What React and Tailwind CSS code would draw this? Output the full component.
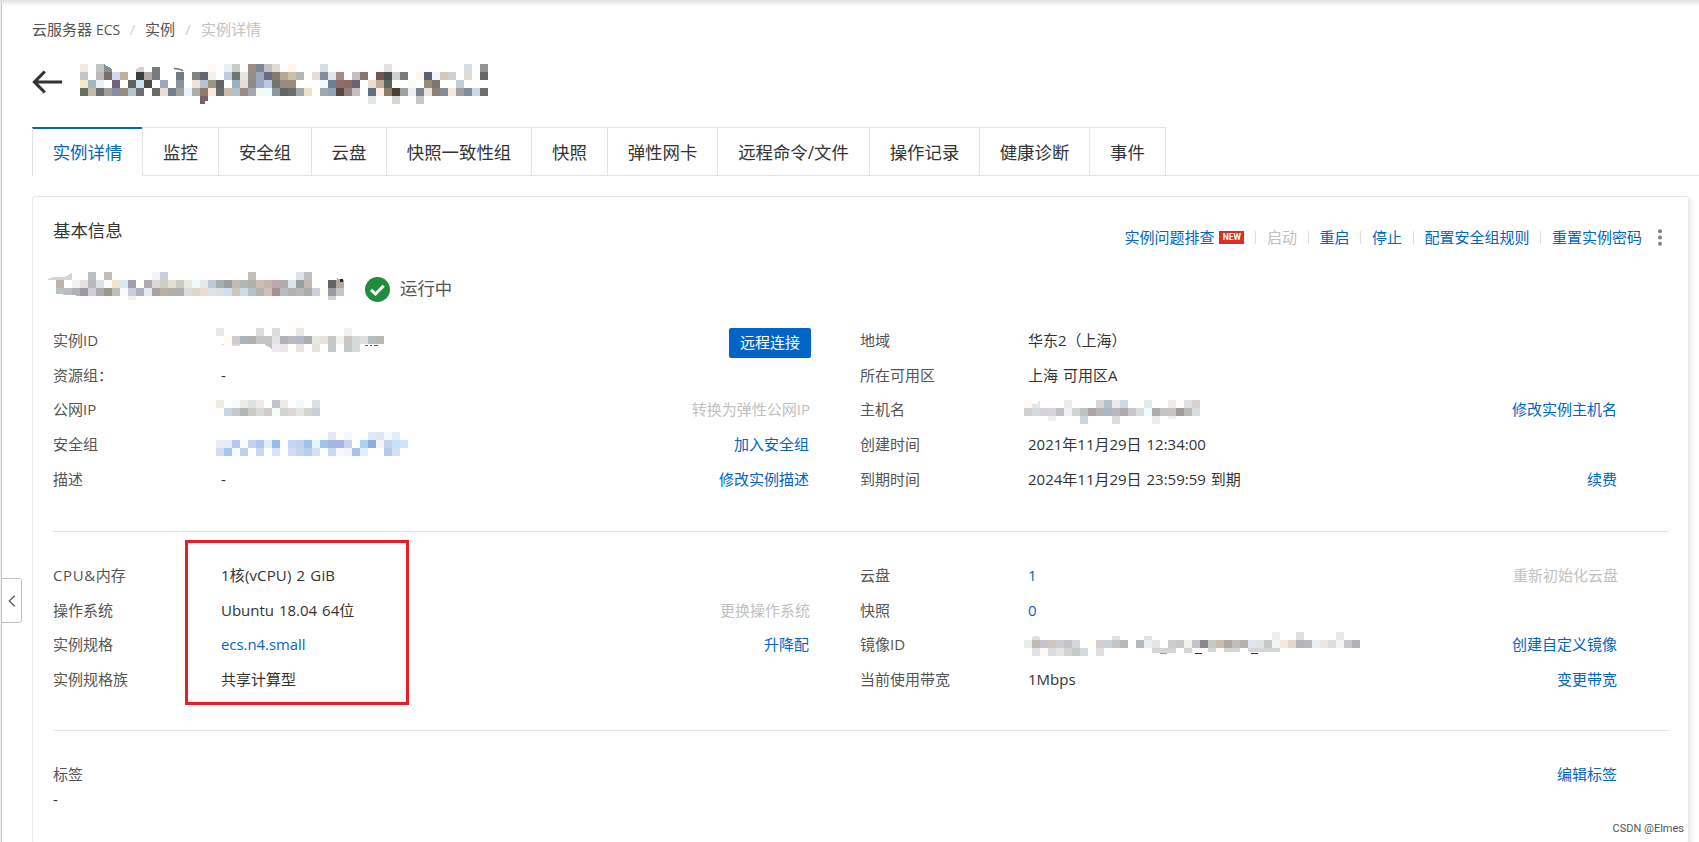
const CELL = 8;

// Mozaik penutup data sensitif: setiap baris = daftar "kolom:warna"
const titleMosaic = [
  '0:f3e8e0 2:c4c4c4 16:fff8f4 18:e9eff3 19:c8cacb 21:9a8d85 22:808490 23:c4bfc2 24:e2d8d5 26:fff3ea 30:d6dde9 38:e6e0de 48:d4dce7 50:939393',
  '0:c2c7c3 2:b9b9b9 3:7a6d6a 4:d0d9ef 5:bfae98 7:383d3d 8:b5aaa3 9:757b7f 12:6f7b86 14:828284 15:616575 16:f0f0ee 18:c0ccd9 19:6c7673 20:e5e7e0 21:928e89 22:9ba8bd 23:6e6982 24:857a70 25:b5a896 26:cabead 27:b5b5b6 28:fffffb 29:e5ddd9 30:848a98 31:e1e4e8 32:a18d84 34:c3bec2 35:85776e 37:6c5850 38:4c4e4d 39:cfcfd0 40:7c7a76 42:fef4ea 43:5c5e71 44:f0f3fc 45:d3c6ba 46:cdd0d1 48:dfdcd4 50:6a6768',
  '0:f4e8cc 1:a0b6c3 2:e8f0fa 4:706374 6:59645c 7:cde0f2 8:4b4a43 10:9ca9b8 12:8b919e 14:ece2d6 15:b5c2cf 16:9d9488 17:646464 19:9ab0c0 20:e6dcd8 21:8c8b88 22:9ba8bf 23:bcc6e0 24:6f7470 25:988a80 26:998c7a 28:fffffa 30:eefaff 31:6c8090 32:8a7068 33:8a6c61 34:6c6272 36:ecddd0 37:beae99 38:5d625c 41:f9fcf5 43:978d78 44:7c7670 47:c2cdd7',
  '0:627260 1:c7b7a8 2:6b6d70 3:9e9e9e 4:838da5 5:978b7c 6:b2c5cf 7:6d6f6f 9:6b6a68 10:ecdcd7 11:737f8a 12:a1a1a2 13:e9f2fb 14:ababab 15:90796b 16:f8e9da 17:686a6a 18:cbbca9 19:b1c0c9 20:998c88 21:a4a7af 22:f7f7ee 23:edfbff 24:8e979b 25:5f6464 26:6a6e6e 27:a3a9a6 28:efdfc8 30:9ca8b0 31:93a3b3 32:58483d 33:8f807f 34:c5bfc4 36:5d6f80 37:f9eee1 38:8d7c67 39:4a3f36 40:9f9f9f 41:ebeef3 42:7d848d 43:e7e5de 44:907f78 45:838b97 46:f2e8df 47:a1a09f 48:84899d 49:cbd7e2 50:6e6e6e',
  '15:706365 36:e1e6ea 39:d5d6d0 42:c6c6c6',
];

const nameMosaic = [
  '5:bbbcc4 7:c0bebb 13:f2f3fa 14:c9cedd 25:c2beb9 31:dce2e7 32:bdbfc0',
  '1:bab2ab 3:f2f2f2 4:e6dfe2 5:b9b8bb 6:dae1e8 7:fcfbf9 8:f0e2cf 9:dae6f1 10:9fa0a9 12:ada8b1 13:dbd8d2 14:cecdc2 15:e3ded1 16:cccbc2 17:e9e9e2 18:eff9fb 19:e6e8e7 20:bdcad3 21:a5adae 22:999f9f 23:c5b9b5 24:b2b5b5 25:b0b1ae 26:c8bdb7 27:c5b5ae 28:bfa8ab 29:adadae 30:dce2e9 31:989fa0 32:c2b7b2 35:646464 36:b5a79c',
  '1:bac2c5 2:b9bfc0 3:b1b0b4 4:9b99a5 5:d4cdd6 6:aeabac 7:99978e 8:bfbfba 9:f6fafe 10:c5cfe0 11:abb1bd 12:e6e9ef 13:a8a2a3 14:b9afa5 15:b2aea9 16:afaeae 17:dbdcda 18:dcd7ca 19:ebdacd 20:e0e3e6 21:dae1e1 22:d0dfee 23:cbc5bf 24:ccdbe8 25:b4c2ce 26:b0b5b4 27:cdbfbb 28:a3928f 29:b8bcbe 30:b2b0b2 31:b6b7b9 32:ababad 33:cbd0da 34:fffdf8 35:9b9aa2 36:c2c6cb',
  '10:f8efe9 35:d3d3d3',
];

const idMosaic = [
  '0:e8e8e8 5:d9dce1 7:dcdcdc 10:ede7e4 16:f4f0ee',
  '1:fffbf2 2:cdcdcd 3:abb3bf 4:b0b1ac 5:c5c4c6 6:c5c4c6 7:e3e4e2 8:b3b0b9 9:bdbabe 10:b5b9c7 11:adadad 12:e7e9e7 13:e4e4dd 14:c6c7c5 15:f0f0ec 16:c9c5c1 17:d3dada 18:dfdfdf 19:b5bec1 20:bab8b2',
  '7:ece8ed 8:ebe6e4 10:e8e2e0 12:e8e2df 14:c3c8c8 16:c2c8c8 17:d3dad8',
];

const ipMosaic = [
  '0:f0eae5 2:f5fbfe 3:eeebe7 4:dae2e2 5:f0eae7 7:c0c3cb 8:eee9e6 10:f1f8fb 12:dde0e3',
  '1:c8d6e1 2:c9c8c9 3:b0b8b5 4:c9c9c8 5:d7dad9 6:d1cbcd 7:f5fdfb 8:d3d3d1 9:dbd8d7 10:e4e4e2 11:d5d4d3 12:cbced8',
];

const groupMosaic = [
  '14:e0e8f5 16:f0f8fe 19:e0e7f5 20:dfe6f3 21:f0faff 22:e3ebf7',
  '0:e8ecf7 1:e6e9f7 2:b8c6e8 3:f9f9fc 4:c5d2ee 5:acc9ec 6:dfedf8 7:96bdea 9:c5d6ee 10:bed1ef 11:9fc2e8 12:e5f3fc 13:a1c3e8 14:a6b6e0 15:a6b6e0 16:cdd0ea 18:a9d3f3 19:8fabdd 20:f2f2f8 21:c3d3ed 22:c4e1f5 23:cfe4f5',
  '0:d3dcf1 1:a3c7ec 2:f5fdff 3:bfd0ed 5:c8d7ef 7:d6e3f5 9:d4dbf0 10:c5d4ed 11:b5cfec 12:d3dff3 14:c8daee 15:f8f8fc 16:f0f5fc 17:adc1e6 18:dff0fa 21:b7c8e8 22:d5dff3',
];

const hostMosaic = [
  '0:fdf8f4 5:ebebec 9:d9d7d3 10:b3c0c9 11:ecebe8 12:ccdae4 15:e6e7e9 18:ececec 20:dde0e4 21:d7d2cf',
  '0:cfcfd0 1:d3d9e1 2:d5d3d9 3:d8d4d7 4:c1bec4 5:eef2f8 6:d0d3d1 7:bcc3c1 8:aea4a6 9:b5b3b6 10:aab6c5 11:bab8bd 12:aea9ae 13:cac6c8 14:d8dcdd 15:eefbff 16:aaaeac 17:c4c4c3 18:c6c5c3 19:9f9b98 20:b9bab6 21:d8dde1',
  '7:c7d6e0 11:dfdbd8 16:ecece8',
];

const imageMosaic = [
  '31:eceeef 34:e0dde1 39:e9e8e8',
  '0:e9edea 1:bfbab0 2:c4c3cf 3:d0c6c0 4:ccccd2 5:c3c3c7 6:d8d5de 8:fffff2 9:d5cccd 10:cad1dc 11:c5c4ca 12:b7b9b6 14:b0b9c1 15:eaeef3 16:e7e3e0 18:cbcdc9 19:c8c8c9 20:f3efed 21:c3c3cc 22:8a878e 23:c4cbc5 24:cabda9 25:aea7a0 26:bebdb9 27:b6b2aa 28:dfe6f0 29:e0e3e1 30:c6c7c9 31:f3f5f5 32:f2e8dc 33:e4d7cb 34:b5b3bb 35:b7b9c1 36:e9eef7 37:efe6e1 38:dcdddd 39:f5f4f4 40:c8c6ca 41:b2b1ba',
  '1:e1e1e7 2:fcf8f5 3:dbdce2 4:e2e6e4 5:d5d2d3 6:c4cac7 7:d5d8dc 9:e0dde0',
];

function Mosaic({ rows, cols, className, children }) {
  return (
    <svg
      width={cols * CELL}
      height={rows.length * CELL}
      shapeRendering="crispEdges"
      className={`shrink-0 overflow-visible ${className || ''}`}
    >
      {rows.map((row, y) =>
        row.split(' ').map((cell) => {
          const [x, color] = cell.split(':');
          return <rect key={`${x}-${y}`} x={x * CELL} y={y * CELL} width={CELL} height={CELL} fill={`#${color}`} />;
        })
      )}
      {children}
    </svg>
  );
}

const tabs = [
  { label: '监控', width: 'w-[76px]' },
  { label: '安全组', width: 'w-[93px]' },
  { label: '云盘', width: 'w-[75px]' },
  { label: '快照一致性组', width: 'w-[145px]' },
  { label: '快照', width: 'w-[76px]' },
  { label: '弹性网卡', width: 'w-[110px]' },
  { label: '远程命令/文件', width: 'w-[152px]' },
  { label: '操作记录', width: 'w-[110px]' },
  { label: '健康诊断', width: 'w-[110px]' },
  { label: '事件', width: 'w-[76px]' },
];

const actions = ['重启', '停止', '配置安全组规则', '重置实例密码'];

function Row({ label, children, action, disabled }) {
  return (
    <div className="flex h-[34.75px] items-center">
      <div className="w-[168px] shrink-0 text-[#555]">{label}</div>
      <div className="flex flex-1 items-center text-[#333] [word-spacing:1px]">{children}</div>
      {action && (
        <div className={disabled ? '-mr-px text-[#c1c1c1]' : 'text-[#0064c8]'}>{action}</div>
      )}
    </div>
  );
}

function Separator() {
  return <span className="mx-[10.75px] h-[13px] w-px bg-[#dedede]"></span>;
}

export default function App() {
  return (
    <div className="relative flex h-[842px] w-[1699px] overflow-hidden bg-white font-['Open_Sans','Noto_Sans_CJK_SC',sans-serif] text-[15px] leading-none whitespace-nowrap">
      {/* Bayangan tipis dari header di atas */}
      <div className="absolute inset-x-0 top-0 h-[6px] bg-gradient-to-b from-[#dfdfdf] to-white/0"></div>

      <div className="w-[2px] shrink-0 border-r border-[#c4c6ca] bg-[#f0f0f0]"></div>

      {/* Tombol lipat sidebar */}
      <div className="absolute left-[1px] top-[578px] flex h-[45px] w-[21px] items-center justify-center rounded-r-[3px] border border-[#bcc2ca] bg-white">
        <svg width="8" height="12" viewBox="0 0 8 12" fill="none" stroke="#555" strokeWidth="1.2">
          <path d="M6.7 0.8L1.2 6L6.7 11.2" />
        </svg>
      </div>

      <div className="flex flex-1 flex-col pl-[30px]">
        <div className="mt-[17px] flex h-[24px] shrink-0 items-center text-[#555]">
          <span className="w-[88px]">云服务器 <span className="text-[14px]">ECS</span></span>
          <span className="w-[25px] text-center text-[#d0d0d0]">/</span>
          <span className="w-[30px]">实例</span>
          <span className="w-[26px] text-center text-[#d0d0d0]">/</span>
          <span className="text-[#c1c1c1]">实例详情</span>
        </div>

        <div className="mt-[23px] flex h-[63px] shrink-0 items-start">
          <svg width="31" height="24" viewBox="0 0 31 24" fill="none" stroke="#333" strokeWidth="3.2" className="mt-[6px] mr-[17px]">
            <path d="M30 12H2.5M12.8 1.5L2.5 12L12.8 22.5" />
          </svg>
          <Mosaic rows={titleMosaic} cols={51}>
            <path d="M24 0L32 5V8H24Z" fill="#8490a0" />
            <path d="M56 8V5Q60 2 64 3V8Z" fill="#e0d0c8" />
            <path d="M72 3H80V8H72Z" fill="#757b7f" />
            <path d="M94 4.5Q100 4.5 103 7" fill="none" stroke="#6a7078" strokeWidth="1.5" shapeRendering="auto" />
            <path d="M125 37H128V40H125Z" fill="#fff" />
          </Mosaic>
        </div>

        <div className="flex h-[49px] shrink-0 text-[17.4px] text-[#333]">
          <div className="flex w-[110px] items-center justify-center border-l border-t-2 border-l-[#e3e4e6] border-t-[#0064c8] pt-px text-[#0064c8]">
            实例详情
          </div>
          {tabs.map((tab) => (
            <div key={tab.label} className={`flex items-center justify-center border-y border-l border-[#e3e4e6] pt-[3px] ${tab.width}`}>
              {tab.label}
            </div>
          ))}
          <div className="flex-1 border-b border-l border-[#e3e4e6]"></div>
        </div>

        <div className="mt-[20px] flex h-[648px] w-[1657px] shrink-0 flex-col rounded-[3px] border border-[#e7e7e7] px-[20px] shadow-[3px_2px_4px_rgba(0,0,0,0.08)]">
          <div className="flex h-[75px] shrink-0 items-start justify-between">
            <h2 className="mt-[25px] text-[17.4px] text-[#333]">基本信息</h2>
            <div className="mt-[27px] mr-[6px] flex h-[26px] items-center text-[#0064c8]">
              <span>实例问题排查</span>
              <span className="ml-[5px] flex h-[13px] w-[25px] items-center justify-center bg-[#d93026] pt-px font-['Roboto'] text-[8.5px] font-bold text-white">NEW</span>
              <Separator />
              <span className="text-[#c1c1c1]">启动</span>
              {actions.map((action) => (
                <span key={action} className="flex items-center">
                  <Separator />
                  <span>{action}</span>
                </span>
              ))}
              <svg width="4" height="17" fill="#808080" className="ml-[16px]">
                <circle cx="2" cy="2.3" r="2" />
                <circle cx="2" cy="8.5" r="2" />
                <circle cx="2" cy="14.7" r="2" />
              </svg>
            </div>
          </div>

          <div className="flex h-[51px] shrink-0 items-start">
            <Mosaic rows={nameMosaic} cols={37} className="-ml-[5px]">
              <path d="M0 7Q6 4 14 5Q20 5 24 0V8H0Z" fill="#d4d4d4" />
              <path d="M289 6L296 10V16H292Z" fill="#b5a79c" />
              <path d="M292 7H295V10H292Z" fill="#222a33" />
              <path d="M8 22L48 25H8ZM80 28H88V32H80ZM280 28H288V32H280Z" fill="#fff" />
            </Mosaic>
            <svg width="25" height="25" viewBox="0 0 25 25" className="ml-[21px] mt-[5px]">
              <circle cx="12.5" cy="12.5" r="12.5" fill="#1e8e3e" />
              <path d="M6 12.8L10.5 17L18.7 8.8" fill="none" stroke="#fff" strokeWidth="3" />
            </svg>
            <span className="ml-[10px] mt-[8px] text-[17.4px] text-[#555]">运行中</span>
          </div>

          <div className="flex h-[209px] shrink-0 border-b border-[#e3e4e6]">
            <div className="w-[757px] pr-px">
              <Row
                label="实例ID"
                action={<button className="mt-[5px] mr-[-2px] h-[30px] w-[82px] rounded-[2px] bg-[#0064c8] text-white">远程连接</button>}
              >
                <Mosaic rows={idMosaic} cols={21} className="-ml-[5px]">
                  <path d="M6 16H8V17H6ZM16 16H24V18H16Z" fill="#d8d8d8" />
                  <path d="M48 16H56V21Z" fill="#c4bfc2" />
                  <path d="M149 17H152M154 17H156M158 17H162" stroke="#555" />
                </Mosaic>
              </Row>
              <Row label="资源组：">-</Row>
              <Row label="公网IP" action="转换为弹性公网IP" disabled>
                <Mosaic rows={ipMosaic} cols={13} className="-mt-[3px] -ml-[5px]" />
              </Row>
              <Row label="安全组" action="加入安全组">
                <Mosaic rows={groupMosaic} cols={24} className="-mt-px -ml-[5px]" />
              </Row>
              <Row label="描述" action="修改实例描述">-</Row>
            </div>
            <div className="ml-[50px] w-[757px]">
              <Row label="地域">华东2（上海）</Row>
              <Row label="所在可用区">上海 可用区A</Row>
              <Row label="主机名" action="修改实例主机名">
                <Mosaic rows={hostMosaic} cols={22} className="mt-[4px] -ml-[4px]">
                  <path d="M8 4H14V1H16V8H8Z" fill="#e6e6e6" />
                  <path d="M24 16H32V21H24ZM144 16H152V19H144Z" fill="#f0f0f0" />
                </Mosaic>
              </Row>
              <Row label="创建时间">2021年11月29日 12:34:00</Row>
              <Row label="到期时间" action="续费">2024年11月29日 23:59:59 到期</Row>
            </div>
          </div>

          <div className="relative flex h-[199px] shrink-0 border-b border-[#e3e4e6] pt-[26px]">
            <div className="w-[757px] pr-px">
              <Row label={<><span className="tracking-[0.6px]">CPU&amp;</span>内存</>}>
                <span className="tracking-[0.15px]">1核(vCPU) 2 GiB</span>
              </Row>
              <Row label="操作系统" action="更换操作系统" disabled>Ubuntu 18.04 64位</Row>
              <Row label="实例规格" action="升降配"><span className="text-[14.85px] text-[#0064c8]">ecs.n4.small</span></Row>
              <Row label="实例规格族">共享计算型</Row>
            </div>
            <div className="ml-[50px] w-[757px]">
              <Row label="云盘" action="重新初始化云盘" disabled><span className="text-[#0064c8]">1</span></Row>
              <Row label="快照"><span className="text-[#0064c8]">0</span></Row>
              <Row label="镜像ID" action="创建自定义镜像">
                <Mosaic rows={imageMosaic} cols={42} className="-mt-[2px] -ml-[4px]">
                  <path d="M8 5Q12 2 16 5V8H8ZM88 4H96V8H88ZM120 4H128V8H120Z" fill="#dfe0e2" />
                  <path d="M128 16H152V21H128ZM160 16H168V21H160ZM184 16H192V20H184ZM200 16H216V20H200ZM224 16H256V20H224Z" fill="#d3d5d7" />
                  <path d="M136 21.5H143" stroke="#999" />
                  <path d="M171 21.5H178M227 21.5H234" stroke="#333" />
                </Mosaic>
              </Row>
              <Row label="当前使用带宽" action="变更带宽">1Mbps</Row>
            </div>
            {/* Kotak merah penanda spesifikasi */}
            <div className="absolute left-[132px] top-[8px] h-[165px] w-[224px] border-3 border-[#ed1c24]"></div>
          </div>

          <div className="flex h-[84px] w-[1564px] shrink-0 items-start justify-between pt-[36px] text-[#555]">
            <div>
              <div>标签</div>
              <div className="mt-[10px] text-[#333]">-</div>
            </div>
            <div className="text-[#0064c8]">编辑标签</div>
          </div>
        </div>
      </div>

      <div className="absolute right-[15px] bottom-[8px] font-['Roboto'] text-[11px] text-[#555]">CSDN @Elmes</div>
    </div>
  );
}
